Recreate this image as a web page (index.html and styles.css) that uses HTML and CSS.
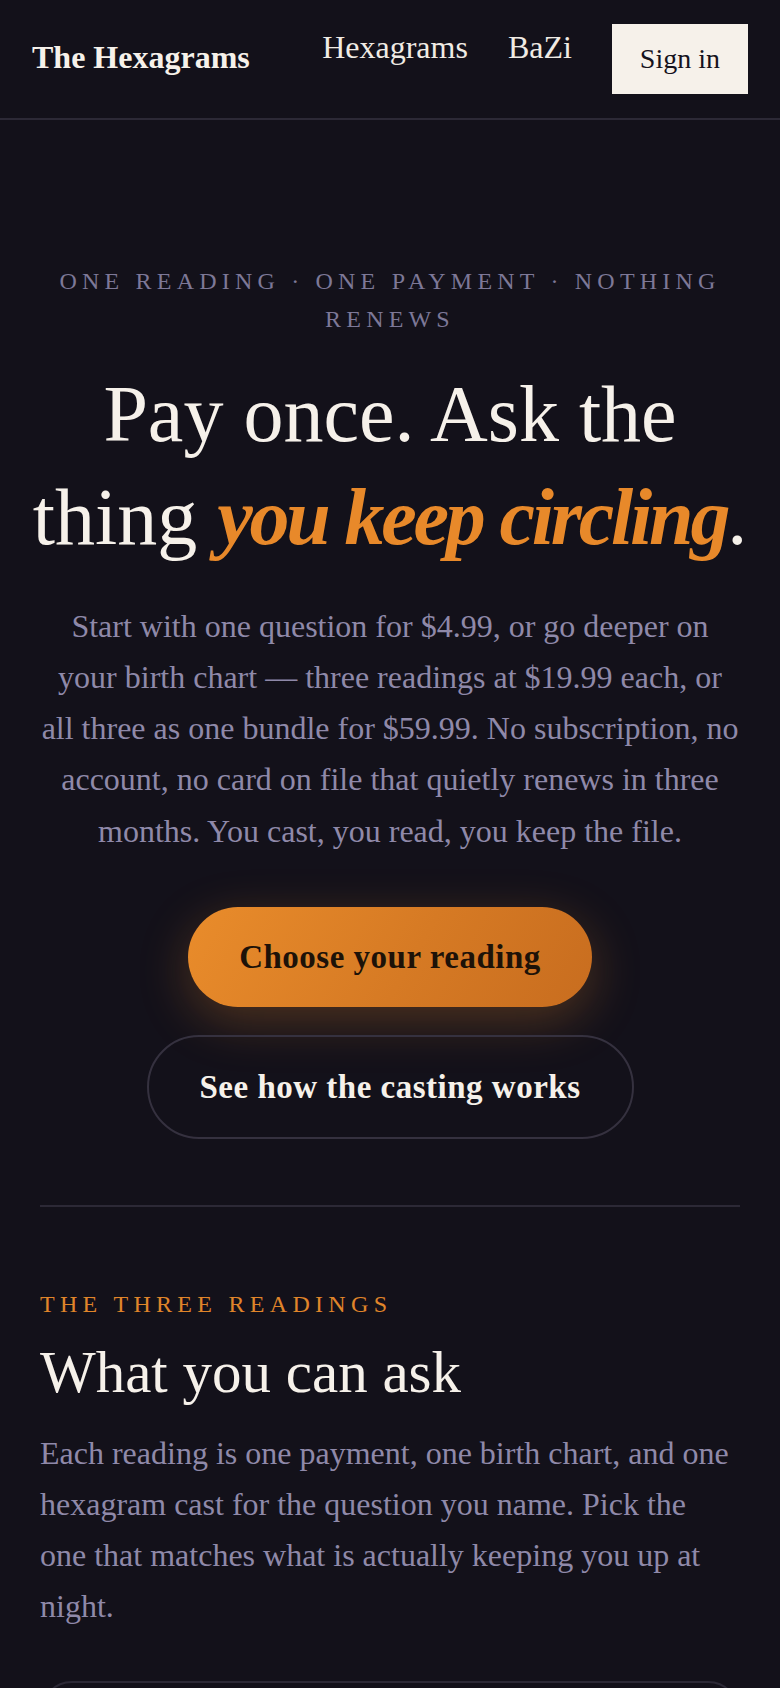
FILE: index.html
```html
<!DOCTYPE html>
<html lang="en">
<head>
<meta charset="utf-8">
<title>The Hexagrams — Pay once</title>
<link rel="stylesheet" href="styles.css">
</head>
<body>
<header class="site-header">
  <a class="brand" href="#">The Hexagrams</a>
  <nav class="nav">
    <a class="nav-link" href="#">Hexagrams</a>
    <a class="nav-link" href="#">BaZi</a>
    <a class="btn-signin" href="#">Sign in</a>
  </nav>
</header>
<main class="container">
  <section class="hero">
    <p class="eyebrow">ONE READING · ONE PAYMENT · NOTHING RENEWS</p>
    <h1 class="hero-title">Pay once. Ask the<br>thing <em>you keep circling</em>.</h1>
    <p class="hero-lead">Start with one question for $4.99, or go deeper on your birth chart — three readings at $19.99 each, or all three as one bundle for $59.99. No subscription, no account, no card on file that quietly renews in three months. You cast, you read, you keep the file.</p>
    <div class="hero-actions">
      <a class="btn btn-primary" href="#">Choose your reading</a>
      <a class="btn btn-ghost" href="#">See how the casting works</a>
    </div>
  </section>
  <section class="readings">
    <p class="section-eyebrow">THE THREE READINGS</p>
    <h2 class="section-title">What you can ask</h2>
    <p class="section-lead">Each reading is one payment, one birth chart, and one hexagram cast for the question you name. Pick the one that matches what is actually keeping you up at night.</p>
    <div class="card"></div>
  </section>
</main>
</body>
</html>
```
FILE: styles.css
```css
* { box-sizing: border-box; }
html, body { margin: 0; padding: 0; }
body {
  background: #13111a;
  color: #f6f1ea;
  font-family: "Liberation Serif", "Times New Roman", serif;
}
a { text-decoration: none; color: inherit; }

.site-header {
  display: flex;
  justify-content: space-between;
  align-items: center;
  padding: 24px 32px;
  border-bottom: 2px solid #2c2936;
}
.brand {
  font-size: 32px;
  font-weight: 700;
  color: #f6f1ea;
  line-height: 1;
  padding-bottom: 4px;
}
.nav {
  display: flex;
  align-items: flex-start;
  gap: 40px;
}
.nav-link {
  font-size: 32px;
  line-height: 46px;
  color: #f0ebe4;
}
.btn-signin {
  font-size: 28px;
  line-height: 30px;
  padding: 20px 28px;
  background: #f6f1ea;
  color: #16131d;
}

.container { padding: 0 40px; }

.hero {
  padding: 142px 0 66px;
  text-align: center;
  border-bottom: 2px solid #2c2936;
}
.eyebrow {
  margin: 0;
  font-size: 24px;
  line-height: 1.6;
  letter-spacing: 5.2px;
  color: #7d7897;
}
.hero-title {
  margin: 24px -20px 0;
  font-size: 80px;
  line-height: 103px;
  font-weight: 400;
  color: #f6f1ea;
}
.hero-title em {
  font-weight: 700;
  font-style: italic;
  letter-spacing: -0.04em;
  color: #e8892a;
}
.hero-lead {
  margin: 32px 0 0;
  font-size: 32px;
  line-height: 1.6;
  color: #8f89a9;
}
.hero-actions {
  display: flex;
  flex-direction: column;
  align-items: center;
  gap: 28px;
  margin-top: 50px;
}
.btn {
  display: inline-block;
  font-size: 33px;
  font-weight: 700;
  line-height: 36px;
  letter-spacing: 0.5px;
  border-radius: 999px;
}
.btn-primary {
  padding: 32px 51px;
  background: linear-gradient(120deg, #e98c2b 0%, #d67a24 55%, #c86d1f 100%);
  color: #1d1208;
  box-shadow: 0 14px 50px rgba(232, 137, 42, 0.28);
}
.btn-ghost {
  padding: 32px 51px;
  border: 2px solid #35313f;
  color: #f6f1ea;
}

.readings { padding-top: 78px; }
.section-eyebrow {
  margin: 0;
  font-size: 24px;
  line-height: 1.6;
  letter-spacing: 5.3px;
  color: #e0852a;
}
.section-title {
  margin: 14px 0 0;
  font-size: 59px;
  line-height: 1.2;
  font-weight: 400;
  color: #f6f1ea;
}
.section-lead {
  margin: 20px 0 0;
  font-size: 32px;
  line-height: 1.6;
  color: #8f89a9;
}
.card {
  margin-top: 48px;
  min-height: 320px;
  border: 2px solid #2c2936;
  border-radius: 32px;
}
```
